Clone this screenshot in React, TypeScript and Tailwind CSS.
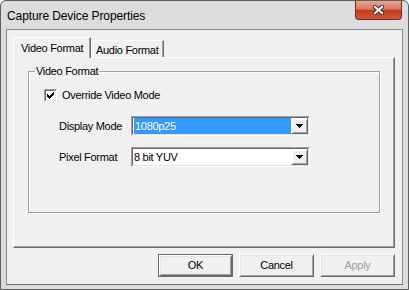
// Classic Win7-basic style dialog: Capture Device Properties
import React from "react";

const raised =
  "border border-t-white border-l-white border-r-[#696969] border-b-[#696969] shadow-[inset_1px_1px_#e3e3e3,inset_-1px_-1px_#a0a0a0] bg-[#f0f0f0]";

function Combo({ value, selected }: { value: string; selected?: boolean }) {
  return (
    <div className="flex h-[20px] w-[179px] border border-t-[#a0a0a0] border-l-[#a0a0a0] border-r-white border-b-white">
      <div className="flex flex-1 border border-t-[#696969] border-l-[#696969] border-r-[#e3e3e3] border-b-[#e3e3e3] bg-white">
        {selected ? (
          <div className="flex flex-1 pl-[1px]">
            <div className="flex flex-1 items-center bg-[#3399ff] pl-[1px] text-white">{value}</div>
          </div>
        ) : (
          <div className="flex flex-1 items-center pl-[1px]">{value}</div>
        )}
        <div className={`flex w-[17px] flex-none items-center justify-center border-t-[#e3e3e3] border-l-[#e3e3e3] ${raised} shadow-[inset_1px_1px_#fff,inset_-1px_-1px_#a0a0a0]`}>
          <svg width="7" height="4" viewBox="0 0 7 4" shapeRendering="crispEdges">
            <rect x="0" y="0" width="7" height="1" fill="#000" />
            <rect x="1" y="1" width="5" height="1" fill="#000" />
            <rect x="2" y="2" width="3" height="1" fill="#000" />
            <rect x="3" y="3" width="1" height="1" fill="#000" />
          </svg>
        </div>
      </div>
    </div>
  );
}

function Button({ label, isDefault, disabled }: { label: string; isDefault?: boolean; disabled?: boolean }) {
  const face = (
    <div className={`flex h-full w-full items-center justify-center ${raised} ${disabled ? "text-[#a0a0a0]" : ""}`}>
      {label}
    </div>
  );
  if (isDefault) {
    return <div className="h-[23px] w-[75px] border border-[#696969]">{face}</div>;
  }
  return <div className="h-[23px] w-[75px]">{face}</div>;
}

export default function App() {
  return (
    <div className="h-[290px] w-[409px] bg-white font-['Liberation_Sans',Arial,sans-serif] text-[11px] tracking-[-0.3px] text-black">
      <div className="flex h-full flex-col rounded-t-[6px] border border-[#5e5e5e] bg-[#dcdcdc] px-[5px] pb-[4px]">
        {/* title bar */}
        <div className="flex h-[28px] flex-none items-start justify-between">
          <span className="pl-[1px] pt-[8px] text-[12px] leading-[14px] tracking-[-0.1px]">Capture Device Properties</span>
          <div className="mr-[1px] flex h-[19px] w-[47px] items-center justify-center rounded-b-[4px] border border-t-0 border-[#7b2b1e] bg-[linear-gradient(to_bottom,#e9a591_0%,#d9785f_45%,#c2391c_52%,#d4583a_100%)]">
            <svg width="11" height="10" viewBox="0 0 11 10">
              <path d="M2 2 L9 8 M9 2 L2 8" stroke="#3b3b3b" strokeWidth="4.2" strokeLinecap="square" />
              <path d="M2 2 L9 8 M9 2 L2 8" stroke="#fff" strokeWidth="2" strokeLinecap="square" />
            </svg>
          </div>
        </div>

        {/* client area */}
        <div className="flex flex-1 flex-col border border-[#8c8c8c] border-b-[#6d6d6d] bg-[#f0f0f0] pb-[7px] pl-[6px] pr-[7px] pt-[7px]">
          {/* tabs */}
          <div className="flex h-[20px] flex-none items-end">
            <div className="relative z-10 -mb-px flex h-[21px] w-[78px] items-center rounded-tl-[2px] border-l border-r border-t border-l-white border-r-[#696969] border-t-white bg-[#f0f0f0] pl-[7px] shadow-[inset_-1px_0_#a0a0a0]">
              Video Format
            </div>
            <div className="flex h-[17px] w-[73px] items-center rounded-tl-[2px] border-l border-r border-t border-l-white border-r-[#696969] border-t-white pl-[4px] pt-[2px] shadow-[inset_-1px_0_#a0a0a0]">
              Audio Format
            </div>
          </div>

          {/* tab panel */}
          <div className="h-[191px] flex-none border border-b-[#696969] border-l-white border-r-[#696969] border-t-white px-[14px] pt-[13px] shadow-[inset_-1px_-1px_#a0a0a0]">
            <div className="relative flex h-[142px] flex-col border border-[#a0a0a0] pl-[15px] pt-[17px] shadow-[inset_1px_1px_#fff,1px_1px_#fff]">
              <span className="absolute -top-[7px] left-[6px] bg-[#f0f0f0] px-[1px] leading-[13px]">Video Format</span>

              <div className="flex h-[13px] items-center gap-[5px]">
                <div className="flex h-[13px] w-[13px] border border-b-white border-l-[#a0a0a0] border-r-white border-t-[#a0a0a0]">
                  <div className="flex flex-1 items-center justify-center border border-b-[#e3e3e3] border-l-[#696969] border-r-[#e3e3e3] border-t-[#696969] bg-white">
                    <svg width="7" height="7" viewBox="0 0 7 7" shapeRendering="crispEdges">
                      <path d="M0 2h1v1h1v1h1V3h1V2h1V1h1V0h1v3h-1v1h-1v1h-1v1h-1v1h-1V6H1V5H0z" fill="#000" />
                    </svg>
                  </div>
                </div>
                <span className="leading-[13px]">Override Video Mode</span>
              </div>

              <div className="ml-[15px] mt-[14px] flex flex-col gap-[11px]">
                <div className="flex h-[20px] items-center">
                  <span className="w-[72px]">Display Mode</span>
                  <Combo value="1080p25" selected />
                </div>
                <div className="flex h-[20px] items-center">
                  <span className="w-[72px]">Pixel Format</span>
                  <Combo value="8 bit YUV" />
                </div>
              </div>
            </div>
          </div>

          {/* buttons */}
          <div className="mt-[6px] flex flex-none justify-end gap-[6px]">
            <Button label="OK" isDefault />
            <Button label="Cancel" />
            <Button label="Apply" disabled />
          </div>
        </div>
      </div>
    </div>
  );
}
